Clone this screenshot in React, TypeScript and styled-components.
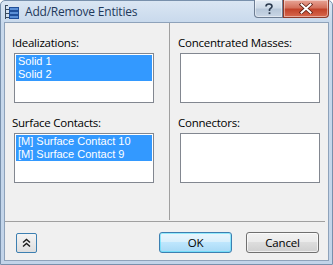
import React from "react";
import styled, { createGlobalStyle } from "styled-components";

const Global = createGlobalStyle`
  html, body { margin: 0; padding: 0; background: #ffffff; }
  body { font-family: "Open Sans", "Liberation Sans", sans-serif; }
`;

const Window = styled.div`
  width: 333px;
  height: 265px;
  box-sizing: border-box;
  display: flex;
  flex-direction: column;
  background: linear-gradient(#dae6f3 0px, #c8d9ec 22px, #c2d4e9 100%);
  border: 1px solid #7890ac;
  border-radius: 5px 5px 0 0;
`;

const TitleBar = styled.div`
  height: 21px;
  display: flex;
  align-items: center;
  padding-left: 3px;
  position: relative;
`;

const Title = styled.span`
  margin-left: 5px;
  font-size: 12px;
  letter-spacing: -0.2px;
  color: #1e395b;
  font-family: "Open Sans", sans-serif;
`;

const Caption = styled.div`
  position: absolute;
  top: -1px;
  right: 3px;
  display: flex;
  height: 18px;
`;

const CapButton = styled.div<{ $close?: boolean }>`
  box-sizing: border-box;
  width: ${(p) => (p.$close ? "46px" : "29px")};
  height: 18px;
  display: flex;
  align-items: center;
  justify-content: center;
  border: 1px solid ${(p) => (p.$close ? "#8d3a2a" : "#6d7d93")};
  border-top: none;
  border-radius: ${(p) => (p.$close ? "0 0 4px 0" : "0 0 0 4px")};
  background: ${(p) =>
    p.$close
      ? "linear-gradient(#e8a597 0%, #d4725d 45%, #c2432a 55%, #d7684e 100%)"
      : "linear-gradient(#e3ebf4 0%, #cfdbe8 45%, #b8c8da 55%, #c9d6e5 100%)"};
  box-shadow: inset 0 0 0 1px rgba(255, 255, 255, 0.45);
`;

const Client = styled.div`
  flex: 1;
  margin: 0 3px 3px 3px;
  background: #f0f0f0;
  border: 1px solid #8ea2ba;
  display: flex;
  flex-direction: column;
`;

const Panels = styled.div`
  display: grid;
  grid-template-columns: 164px 1fr;
  height: 197px;
`;

const Column = styled.div<{ $right?: boolean }>`
  display: flex;
  flex-direction: column;
  padding: 12px 0 0 ${(p) => (p.$right ? "10px" : "9px")};
  border-left: ${(p) => (p.$right ? "1px solid #a0a0a0" : "none")};
`;

const Label = styled.div`
  font-size: 11.5px;
  line-height: 15px;
  height: 15px;
  margin-bottom: 3px;
  color: #000;
  letter-spacing: -0.25px;
  margin-left: -2px;
`;

const ListBox = styled.div`
  box-sizing: border-box;
  width: 140px;
  height: 50px;
  border: 1px solid #828790;
  background: #fff;
  padding: 1px;
  margin-bottom: 12px;
`;

const Item = styled.div<{ $selected?: boolean }>`
  height: 13px;
  line-height: 13px;
  font-family: "Liberation Sans", Arial, sans-serif;
  font-size: 11px;
  padding-left: 2px;
  color: ${(p) => (p.$selected ? "#fff" : "#000")};
  background: ${(p) => (p.$selected ? "#3399ff" : "transparent")};
  white-space: nowrap;
`;

const Separator = styled.div`
  height: 1px;
  background: #a0a0a0;
  margin: 1px 3px 0 0;
`;

const ButtonRow = styled.div`
  display: flex;
  align-items: center;
  padding: 10px 0 0 11px;
`;

const ExpandButton = styled.div`
  box-sizing: border-box;
  width: 21px;
  height: 20px;
  border: 1px solid #3c7fb1;
  border-radius: 2px;
  background: linear-gradient(#f4f4f4, #dedede);
  display: flex;
  align-items: center;
  justify-content: center;
`;

const Spacer = styled.div`
  flex: 1;
`;

const PushButton = styled.div<{ $default?: boolean }>`
  box-sizing: border-box;
  width: 73px;
  height: 21px;
  margin-right: ${(p) => (p.$default ? "14px" : "9px")};
  border: 1px solid ${(p) => (p.$default ? "#3c7fb1" : "#707070")};
  border-radius: 3px;
  display: flex;
  align-items: center;
  justify-content: center;
  font-size: 11.5px;
  letter-spacing: -0.2px;
  color: #000;
  background: ${(p) =>
    p.$default
      ? "linear-gradient(#eaf6fd 0%, #d9f0fc 45%, #bee6fd 50%, #a7d9f5 100%)"
      : "linear-gradient(#f2f2f2 0%, #ebebeb 45%, #dddddd 50%, #cfcfcf 100%)"};
  box-shadow: inset 0 0 0 1px ${(p) => (p.$default ? "#48e0fc88" : "#ffffffaa")};
`;

const TreeIcon = () => (
  <svg width="16" height="16" viewBox="0 0 16 16">
    <path d="M1.5 1 V15 M1 1.5 H4 M1.5 5.5 H5 M1.5 9.5 H5 M1.5 13.5 H5" stroke="#3a4a5c" strokeWidth="1" fill="none" />
    <rect x="5.5" y="3.5" width="9" height="3" fill="#5a8fd6" stroke="#1f4f9a" strokeWidth="1" />
    <rect x="5.5" y="7.5" width="9" height="3" fill="#5a8fd6" stroke="#1f4f9a" strokeWidth="1" />
    <rect x="5.5" y="11.5" width="9" height="3" fill="#5a8fd6" stroke="#1f4f9a" strokeWidth="1" />
  </svg>
);

const HelpGlyph = () => (
  <svg width="10" height="12" viewBox="0 0 10 12">
    <path d="M2 3.5 C2 1.5 3.5 1 5 1 C7 1 8 2 8 3.5 C8 5 6 5.5 5.5 6.5 V8" stroke="#2b3a4e" strokeWidth="1.6" fill="none" />
    <rect x="4.6" y="9.3" width="1.8" height="1.8" fill="#2b3a4e" />
  </svg>
);

const CloseGlyph = () => (
  <svg width="14" height="11" viewBox="0 0 14 11">
    <path d="M2.5 1.5 L11.5 9.5 M11.5 1.5 L2.5 9.5" stroke="#5b1d12" strokeWidth="3.6" strokeLinecap="square" />
    <path d="M2.5 1.5 L11.5 9.5 M11.5 1.5 L2.5 9.5" stroke="#ffffff" strokeWidth="2" strokeLinecap="square" />
  </svg>
);

const DoubleChevron = () => (
  <svg width="9" height="10" viewBox="0 0 9 10">
    <path d="M1 4.5 L4.5 1.5 L8 4.5 M1 8.5 L4.5 5.5 L8 8.5" stroke="#1a1a1a" strokeWidth="1.4" fill="none" />
  </svg>
);

type Section = { label: string; items: string[] };

const left: Section[] = [
  { label: "Idealizations:", items: ["Solid 1", "Solid 2"] },
  { label: "Surface Contacts:", items: ["[M] Surface Contact 10", "[M] Surface Contact 9"] },
];
const right: Section[] = [
  { label: "Concentrated Masses:", items: [] },
  { label: "Connectors:", items: [] },
];

const renderSection = (s: Section) => (
  <React.Fragment key={s.label}>
    <Label>{s.label}</Label>
    <ListBox>
      {s.items.map((it) => (
        <Item key={it} $selected>
          {it}
        </Item>
      ))}
    </ListBox>
  </React.Fragment>
);

export default function App() {
  return (
    <>
      <Global />
      <Window>
        <TitleBar>
          <TreeIcon />
          <Title>Add/Remove Entities</Title>
          <Caption>
            <CapButton>
              <HelpGlyph />
            </CapButton>
            <CapButton $close>
              <CloseGlyph />
            </CapButton>
          </Caption>
        </TitleBar>
        <Client>
          <Panels>
            <Column>{left.map(renderSection)}</Column>
            <Column $right>{right.map(renderSection)}</Column>
          </Panels>
          <Separator />
          <ButtonRow>
            <ExpandButton>
              <DoubleChevron />
            </ExpandButton>
            <Spacer />
            <PushButton $default>OK</PushButton>
            <PushButton>Cancel</PushButton>
          </ButtonRow>
        </Client>
      </Window>
    </>
  );
}
